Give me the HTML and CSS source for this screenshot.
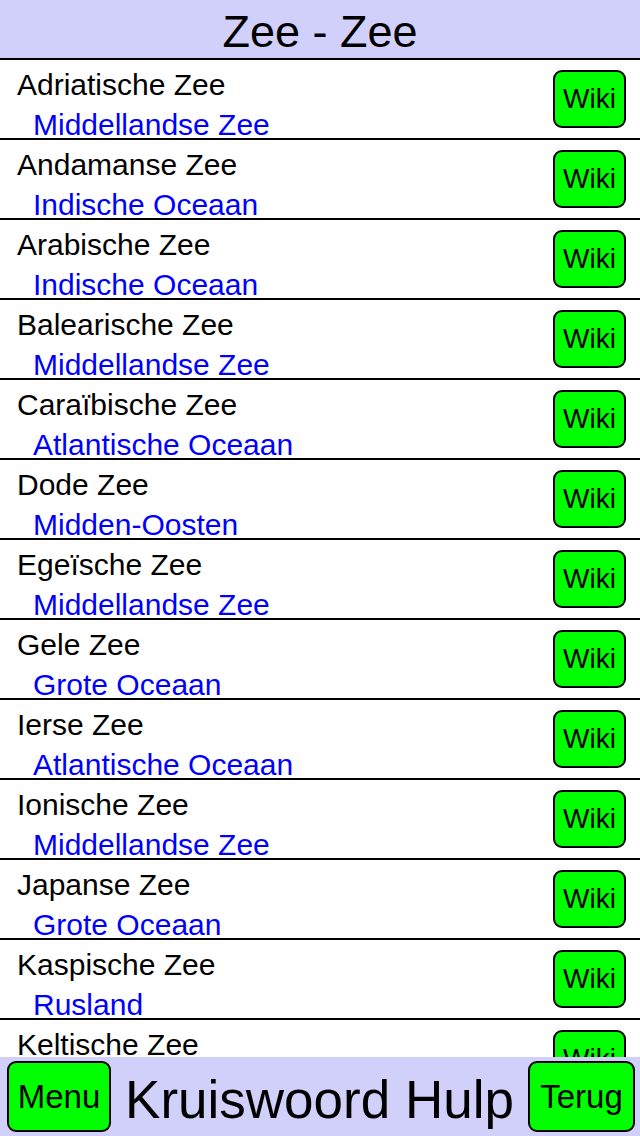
FILE: index.html
```html
<!DOCTYPE html>
<html lang="nl">
<head>
  <meta charset="UTF-8">
  <title>Kruiswoord Hulp - Zee</title>
  <meta name="viewport" content="width=device-width, initial-scale=1.0">
  <link rel="stylesheet" href="styles.css">
</head>
<body>
  <div class="app">
    <header class="top">Zee - Zee</header>

    <ul class="list">
      <li class="row"><div class="info"><div class="name">Adriatische Zee</div><div class="region">Middellandse Zee</div></div><button class="btn wiki">Wiki</button></li>
      <li class="row"><div class="info"><div class="name">Andamanse Zee</div><div class="region">Indische Oceaan</div></div><button class="btn wiki">Wiki</button></li>
      <li class="row"><div class="info"><div class="name">Arabische Zee</div><div class="region">Indische Oceaan</div></div><button class="btn wiki">Wiki</button></li>
      <li class="row"><div class="info"><div class="name">Balearische Zee</div><div class="region">Middellandse Zee</div></div><button class="btn wiki">Wiki</button></li>
      <li class="row"><div class="info"><div class="name">Caraïbische Zee</div><div class="region">Atlantische Oceaan</div></div><button class="btn wiki">Wiki</button></li>
      <li class="row"><div class="info"><div class="name">Dode Zee</div><div class="region">Midden-Oosten</div></div><button class="btn wiki">Wiki</button></li>
      <li class="row"><div class="info"><div class="name">Egeïsche Zee</div><div class="region">Middellandse Zee</div></div><button class="btn wiki">Wiki</button></li>
      <li class="row"><div class="info"><div class="name">Gele Zee</div><div class="region">Grote Oceaan</div></div><button class="btn wiki">Wiki</button></li>
      <li class="row"><div class="info"><div class="name">Ierse Zee</div><div class="region">Atlantische Oceaan</div></div><button class="btn wiki">Wiki</button></li>
      <li class="row"><div class="info"><div class="name">Ionische Zee</div><div class="region">Middellandse Zee</div></div><button class="btn wiki">Wiki</button></li>
      <li class="row"><div class="info"><div class="name">Japanse Zee</div><div class="region">Grote Oceaan</div></div><button class="btn wiki">Wiki</button></li>
      <li class="row"><div class="info"><div class="name">Kaspische Zee</div><div class="region">Rusland</div></div><button class="btn wiki">Wiki</button></li>
      <li class="row"><div class="info"><div class="name">Keltische Zee</div><div class="region">Atlantische Oceaan</div></div><button class="btn wiki">Wiki</button></li>
    </ul>

    <footer class="bottom">
      <button class="btn nav">Menu</button>
      <div class="title">Kruiswoord Hulp</div>
      <button class="btn nav terug">Terug</button>
    </footer>
  </div>
</body>
</html>
```

FILE: styles.css
```css
body { margin: 0; font-family: "Liberation Sans", Arial, sans-serif; background: #fff; color: #000; }
.app { width: 640px; height: 1136px; display: flex; flex-direction: column; overflow: hidden; }

.top { height: 53px; padding-top: 5px; border-bottom: 2px solid #000; background: #d0d0fa; text-align: center; font-size: 45px; line-height: 53px; flex: none; }

.list { flex: 1; margin: 0; padding: 0; list-style: none; overflow: hidden; }
.row { height: 78px; border-bottom: 2px solid #000; display: flex; align-items: center; padding: 0 14px 0 17px; }
.info { flex: 1; align-self: flex-start; padding-top: 10px; }
.name { font-size: 30px; line-height: 30px; }
.region { font-size: 30px; line-height: 30px; margin-top: 10px; padding-left: 16px; color: #0000ff; }

.btn { font-family: inherit; background: #00ff00; color: #000; border: 2px solid #000; border-radius: 9px; padding: 0; cursor: pointer; }
.wiki { width: 73px; height: 58px; font-size: 28px; }

.bottom { height: 79px; flex: none; background: #d0d0fa; display: flex; align-items: center; padding: 0 5px 0 7px; }
.nav { width: 104px; height: 71px; font-size: 33px; }
.terug { width: 107px; }
.title { flex: 1; text-align: center; font-size: 53px; line-height: 73px; padding-top: 6px; white-space: nowrap; }
```
